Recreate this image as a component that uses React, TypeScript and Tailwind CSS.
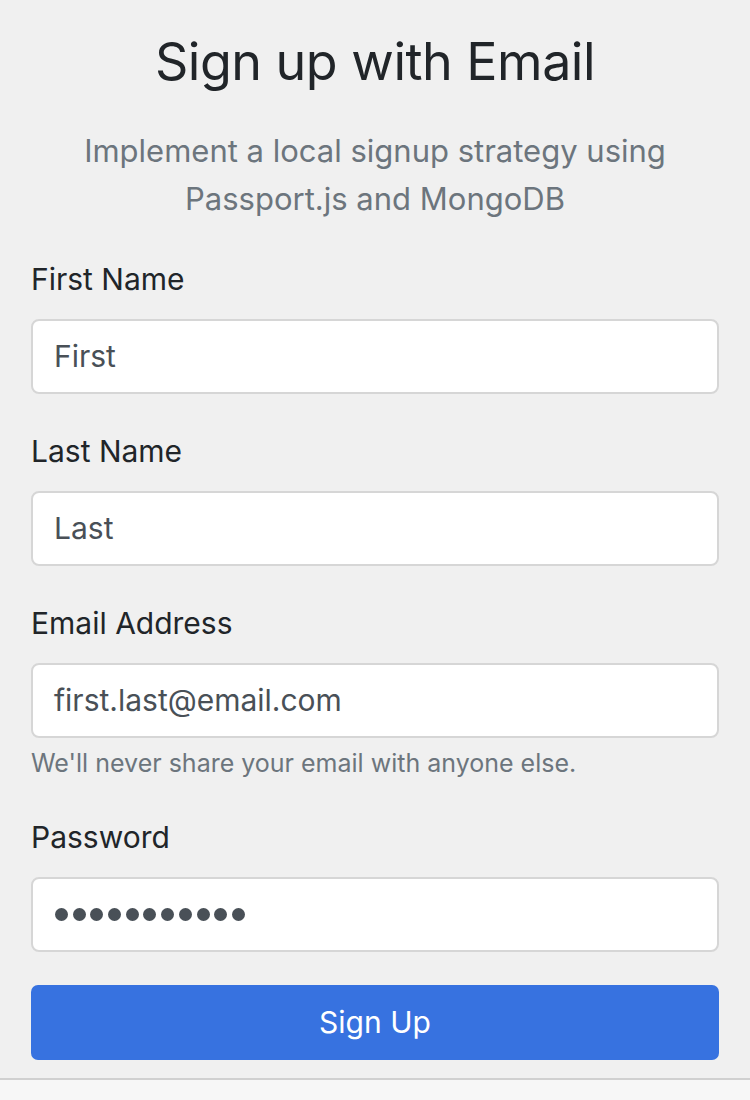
import React from 'react'

const fields = [
  { label: 'First Name', value: 'First' },
  { label: 'Last Name', value: 'Last' },
  { label: 'Email Address', value: 'first.last@email.com', help: "We'll never share your email with anyone else." },
]

function Field({ label, value, help }: { label: string; value: string; help?: string }) {
  return (
    <div className="flex flex-col">
      <label className="text-[30px] leading-[40px] text-[#212529] mb-[20px]">{label}</label>
      <div className="h-[75px] rounded-[8px] border-2 border-[#d6d6d6] bg-white px-[21px] flex items-center text-[30px] text-[#495057]">
        {value}
      </div>
      {help && <p className="text-[25px] leading-[30px] text-[#6c757d] mt-[10px]">{help}</p>}
    </div>
  )
}

export default function App() {
  return (
    <div className="w-[750px] h-[1100px] bg-[#f0f0f0] flex flex-col overflow-hidden" style={{ fontFamily: 'Inter, "Noto Sans", sans-serif' }}>
      <div className="px-[31px] flex flex-col">
        <h1 className="text-center text-[52px] leading-[60px] text-[#212529] mt-[32px] tracking-[-0.5px]">Sign up with Email</h1>
        <p className="text-center text-[31px] leading-[48px] text-[#6c757d] mt-[35px] px-[40px]">
          Implement a local signup strategy using Passport.js and MongoDB
        </p>
        <div className="flex flex-col gap-[37px] mt-[36px]">
          {fields.map(f => <Field key={f.label} {...f} />)}
          <div className="flex flex-col mt-[2px]">
            <label className="text-[30px] leading-[40px] text-[#212529] mb-[20px]">Password</label>
            <div className="h-[75px] rounded-[8px] border-2 border-[#d6d6d6] bg-white px-[22px] flex items-center gap-[4.7px]">
              {Array.from({ length: 11 }).map((_, i) => (
                <span key={i} className="w-[13px] h-[13px] rounded-full bg-[#495057]" />
              ))}
            </div>
          </div>
        </div>
        <button className="mt-[33px] h-[75px] rounded-[7px] bg-[#3772e0] text-white text-[30px]">Sign Up</button>
      </div>
      <div className="mt-[18px] border-t-2 border-[#d0d0d0] flex-1 bg-[#f7f7f7]" />
    </div>
  )
}
